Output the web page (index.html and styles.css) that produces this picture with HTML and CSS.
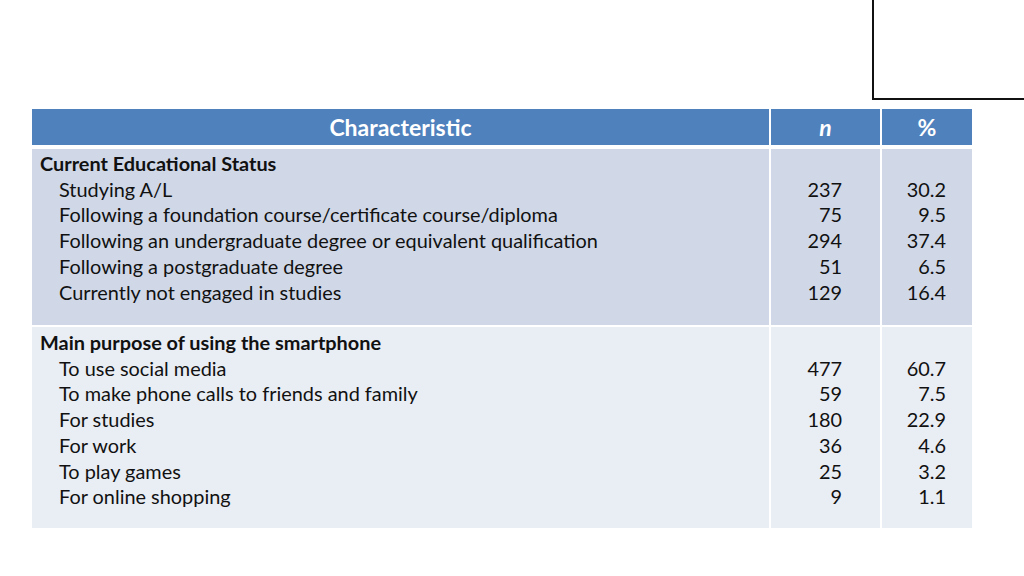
FILE: index.html
```html
<!DOCTYPE html>
<html>
<head>
<meta charset="utf-8">
<link rel="stylesheet" href="styles.css">
</head>
<body>
<div class="corner-box"></div>
<div class="table">
  <div class="hd hd-char">Characteristic</div>
  <div class="hd hd-n">n</div>
  <div class="hd hd-pct">%</div>

  <div class="cell char r1">
    <div class="grp">Current Educational Status</div>
    <div class="item">Studying A/L</div>
    <div class="item">Following a foundation course/certificate course/diploma</div>
    <div class="item">Following an undergraduate degree or equivalent qualification</div>
    <div class="item">Following a postgraduate degree</div>
    <div class="item">Currently not engaged in studies</div>
  </div>
  <div class="cell num n r1">
    <div class="blank">&nbsp;</div>
    <div>237</div><div>75</div><div>294</div><div>51</div><div>129</div>
  </div>
  <div class="cell num pct r1">
    <div class="blank">&nbsp;</div>
    <div>30.2</div><div>9.5</div><div>37.4</div><div>6.5</div><div>16.4</div>
  </div>

  <div class="cell char r2">
    <div class="grp">Main purpose of using the smartphone</div>
    <div class="item">To use social media</div>
    <div class="item">To make phone calls to friends and family</div>
    <div class="item">For studies</div>
    <div class="item">For work</div>
    <div class="item">To play games</div>
    <div class="item">For online shopping</div>
  </div>
  <div class="cell num n r2">
    <div class="blank">&nbsp;</div>
    <div>477</div><div>59</div><div>180</div><div>36</div><div>25</div><div>9</div>
  </div>
  <div class="cell num pct r2">
    <div class="blank">&nbsp;</div>
    <div>60.7</div><div>7.5</div><div>22.9</div><div>4.6</div><div>3.2</div><div>1.1</div>
  </div>
</div>
</body>
</html>
```
FILE: styles.css
```css
html, body {
  margin: 0;
  padding: 0;
  background: #ffffff;
  width: 1024px;
  height: 576px;
  overflow: hidden;
  font-family: "Lato", "Open Sans", sans-serif;
  color: #111111;
}

body {
  position: relative;
}

.corner-box {
  position: absolute;
  left: 872px;
  top: -2px;
  width: 160px;
  height: 102px;
  border: 2px solid #111111;
  box-sizing: border-box;
  background: #ffffff;
}

.table {
  position: absolute;
  left: 32px;
  top: 109px;
  width: 940px;
  display: grid;
  grid-template-columns: 737px 109px 90px;
  grid-template-rows: 37px 177px 201px;
  column-gap: 2px;
  row-gap: 2px;
  background: #ffffff;
}

.hd {
  background: #4f81bd;
  color: #ffffff;
  font-weight: bold;
  font-size: 23px;
  display: flex;
  align-items: center;
  justify-content: center;
  margin-bottom: 1px;
}

.hd-n {
  font-style: italic;
}

.cell {
  font-size: 19.9px;
  line-height: 25.7px;
}

.r1 {
  background: #d0d8e8;
  padding-top: 2px;
  margin-top: 1px;
}

.r2 {
  background: #e9edf4;
  padding-top: 3px;
}

.char {
  padding-left: 8px;
}

.grp {
  font-weight: bold;
}

.item {
  padding-left: 19px;
}

.num {
  text-align: right;
}

.n {
  padding-right: 38px;
}

.pct {
  padding-right: 26px;
}
```
